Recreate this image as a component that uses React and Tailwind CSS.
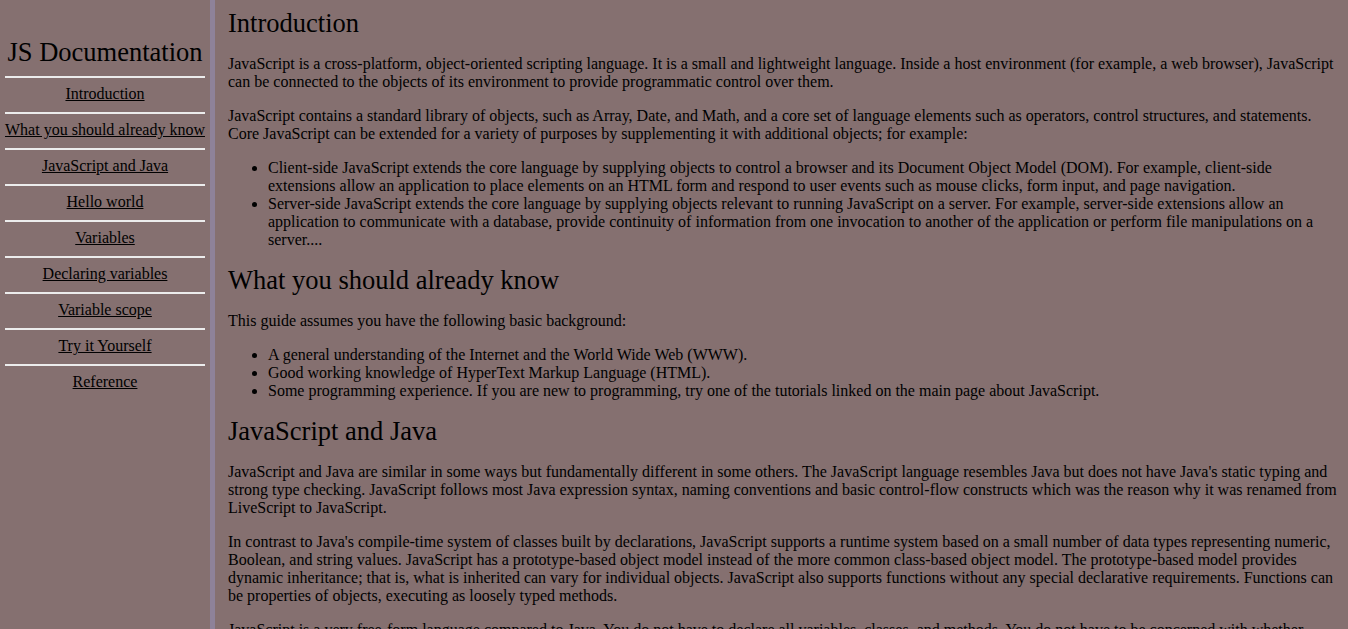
import React from "react";

const navItems = [
  "Introduction",
  "What you should already know",
  "JavaScript and Java",
  "Hello world",
  "Variables",
  "Declaring variables",
  "Variable scope",
  "Try it Yourself",
  "Reference",
];

const Section = ({ title, first, children }) => (
  <section id={title.replace(/ /g, "_")}>
    <h2
      className={`text-[26.5px] leading-[31px] mb-4 ${first ? "mt-2" : "mt-4"}`}
    >
      {title}
    </h2>
    {children}
  </section>
);

const App = () => {
  return (
    <div
      className="flex min-h-screen bg-[#857070] text-black text-[16px] leading-[18px]"
      style={{ fontFamily: '"Liberation Serif", "Times New Roman", serif' }}
    >
      {/* ---------- Sidebar ---------- */}
      <nav className="w-[215px] shrink-0 border-r-[5px] border-[#8e8299] px-[5px]">
        <header className="text-[26.5px] leading-[30px] text-center pt-[37px] pb-[9px]">
          JS Documentation
        </header>
        <ul>
          {navItems.map((item) => (
            <li key={item} className="border-t-2 border-[#ececec] text-center pt-[7px] pb-[9px]">
              <a href={"#" + item.replace(/ /g, "_")} className="underline">
                {item}
              </a>
            </li>
          ))}
        </ul>
      </nav>

      {/* ---------- Main ---------- */}
      <main className="flex-1 pl-[13px] pr-[10px] pb-8">
        <Section title="Introduction" first>
          <p className="mb-4">
            JavaScript is a cross-platform, object-oriented scripting language. It is a small and
            lightweight language. Inside a host environment (for example, a web browser), JavaScript
            can be connected to the objects of its environment to provide programmatic control over
            them.
          </p>
          <p className="mb-4">
            JavaScript contains a standard library of objects, such as Array, Date, and Math, and a
            core set of language elements such as operators, control structures, and statements.
            Core JavaScript can be extended for a variety of purposes by supplementing it with
            additional objects; for example:
          </p>
          <ul className="list-disc pl-10 mb-4">
            <li>
              Client-side JavaScript extends the core language by supplying objects to control a
              browser and its Document Object Model (DOM). For example, client-side extensions allow
              an application to place elements on an HTML form and respond to user events such as
              mouse clicks, form input, and page navigation.
            </li>
            <li>
              Server-side JavaScript extends the core language by supplying objects relevant to
              running JavaScript on a server. For example, server-side extensions allow an
              application to communicate with a database, provide continuity of information from one
              invocation to another of the application or perform file manipulations on a server....
            </li>
          </ul>
        </Section>

        <Section title="What you should already know">
          <p className="mb-4">This guide assumes you have the following basic background:</p>
          <ul className="list-disc pl-10 mb-4">
            <li>A general understanding of the Internet and the World Wide Web (WWW).</li>
            <li>Good working knowledge of HyperText Markup Language (HTML).</li>
            <li>
              Some programming experience. If you are new to programming, try one of the tutorials
              linked on the main page about JavaScript.
            </li>
          </ul>
        </Section>

        <Section title="JavaScript and Java">
          <p className="mb-4">
            JavaScript and Java are similar in some ways but fundamentally different in some others.
            The JavaScript language resembles Java but does not have Java's static typing and strong
            type checking. JavaScript follows most Java expression syntax, naming conventions and
            basic control-flow constructs which was the reason why it was renamed from LiveScript to
            JavaScript.
          </p>
          <p className="mb-4">
            In contrast to Java's compile-time system of classes built by declarations, JavaScript
            supports a runtime system based on a small number of data types representing numeric,
            Boolean, and string values. JavaScript has a prototype-based object model instead of the
            more common class-based object model. The prototype-based model provides dynamic
            inheritance; that is, what is inherited can vary for individual objects. JavaScript also
            supports functions without any special declarative requirements. Functions can be
            properties of objects, executing as loosely typed methods.
          </p>
          <p className="mb-4">
            JavaScript is a very free-form language compared to Java. You do not have to declare all
            variables, classes, and methods. You do not have to be concerned with whether methods
            are public, private, or protected, and you do not have to implement interfaces.
            Variables, parameters, and function return types are not explicitly typed.
          </p>
        </Section>

        <Section title="Hello world">
          <p className="mb-4">
            To get started with writing JavaScript, open the Scratchpad and write your first "Hello
            world" JavaScript code:
          </p>
        </Section>
      </main>
    </div>
  );
};

export default App;
